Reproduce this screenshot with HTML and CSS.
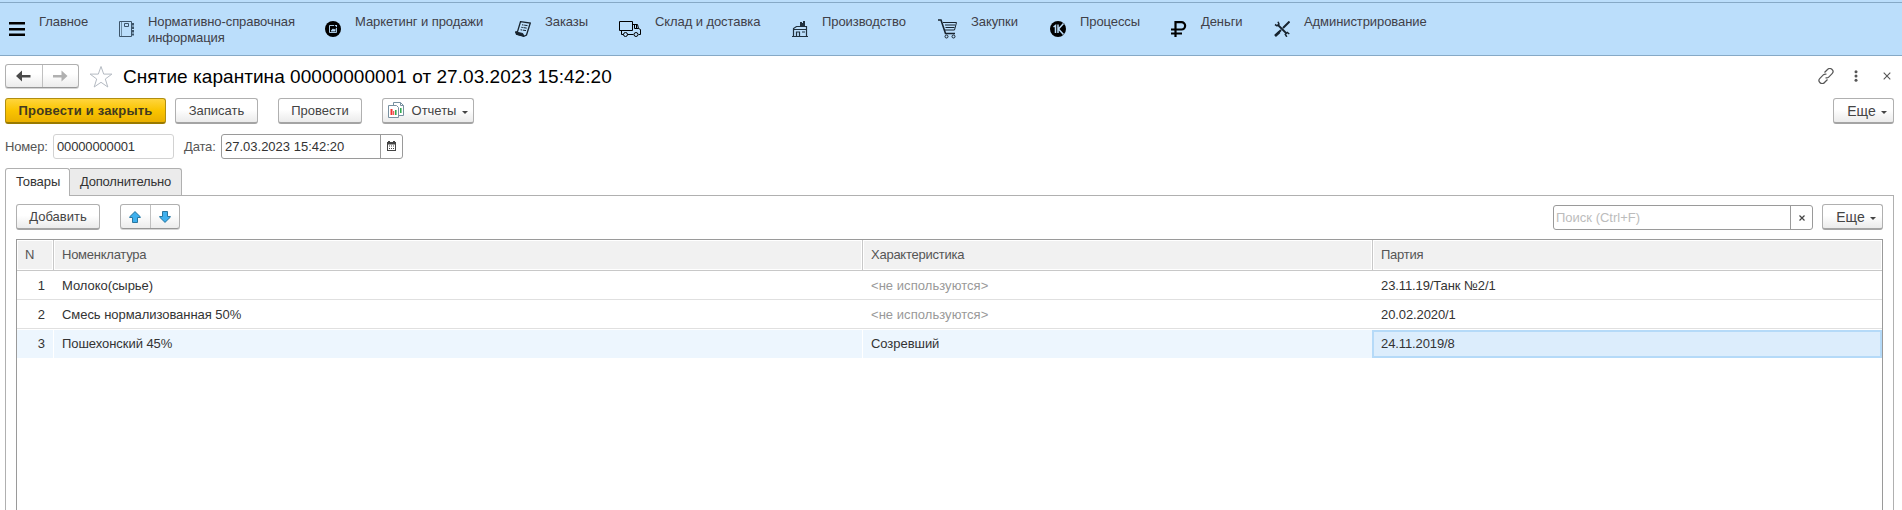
FILE: index.html
```html
<!DOCTYPE html>
<html lang="ru">
<head>
<meta charset="utf-8">
<title>Снятие карантина</title>
<link rel="stylesheet" href="styles.css">
</head>
<body>
<nav class="menu">
  <div class="item"><svg width="16" height="16" viewBox="0 0 16 16"><path d="M0 1h16v2.500H0zM0 7h16v2.500H0zM0 12.500h16V15H0z"/></svg><span>Главное</span></div>
  <div class="item"><svg width="16" height="16" viewBox="0 0 16 16" fill="none" stroke="#3d556a"><path d="M.5.5h12v15H.5z"/><path d="M2.500 1v14" stroke-width=".6"/><path d="M5.500 2.500h4v3h-4z"/><path d="M14 2v12.500" stroke-width="2" stroke-dasharray="2.500 1"/></svg><span>Нормативно-справочная<br>информация</span></div>
  <div class="item"><svg width="16" height="16" viewBox="0 0 16 16"><circle cx="8" cy="8" r="8"/><path d="M11.500 7v4.500h-7v-7H9" fill="none" stroke="#badcf8" stroke-width=".9"/><path d="M6 10.500h4.500V7.500L9 8.500 8 7.500l-2 2zM9.500 4h2.500v2.500z" fill="#badcf8"/></svg><span>Маркетинг и продажи</span></div>
  <div class="item"><svg width="16" height="16" viewBox="0 0 16 16" fill="none" stroke="#17232e"><path d="M5.500.7 15.300 2 11.500 14 8.800 15.300 1.500 13.300.7 11l1.800-.3z" stroke-width="1.300"/><path d="M7 3.800l5.500.8M6.300 6.300l5.400.8M5.600 8.800l5.400.8" stroke-dasharray="1.500 .7 5"/><path d="M.8 11l7 1.500 1 2.600-7-1.800z" fill="#17232e"/></svg><span>Заказы</span></div>
  <div class="item"><svg width="23" height="16" viewBox="0 0 23 16" fill="none" stroke="#000"><path d="M.5.500h13v9H.5zM2.500 9.500v4h2M8.500 13.500h6M13.500 3.500h5l1 4 2 1v5h-2M15.500 4v3.500h4M17.500 4v3"/><circle cx="6.500" cy="13.500" r="2"/><circle cx="17" cy="13.500" r="2"/></svg><span>Склад и доставка</span></div>
  <div class="item"><svg width="16" height="16" viewBox="0 0 16 16" fill="none" stroke="#1f303e"><path d="M8 1h2v1h1V0h2v5H8z" fill="#1f303e" stroke="none"/><path d="M1.500 15.500v-8l3-2h10v10zM0 15.500h16M1 8.500h13M4.500 15v-4h3v4M10 11h3" stroke-width="1.200"/></svg><span>Производство</span></div>
  <div class="item cart"><svg width="20" height="20" viewBox="0 0 20 20" fill="none" stroke="#17232e"><path d="M0 1h3l4.500 13.500H17" stroke-width="1.600"/><path d="M5 3.500h13.500L16.500 11H7M7 6h10M7.500 8.500h9"/><circle cx="8.500" cy="17.500" r="1.500"/><circle cx="15.500" cy="17.500" r="1.500"/></svg><span>Закупки</span></div>
  <div class="item"><svg width="16" height="16" viewBox="0 0 16 16"><circle cx="8" cy="8" r="8"/><path d="M3.500 6l2-1.500V12M8 3.500V12M13.500 2.500L8.500 8l5 5.500" fill="none" stroke="#badcf8" stroke-width="1.500"/></svg><span>Процессы</span></div>
  <div class="item"><svg width="16" height="16" viewBox="0 0 16 16" fill="none" stroke="#000" stroke-width="2.200"><path d="M4.500 16V1.200h6a3.600 3.600 0 0 1 0 7.300H0M0 12.500h11"/></svg><span>Деньги</span></div>
  <div class="item"><svg width="16" height="16" viewBox="0 0 16 16" fill="none" stroke="#17232e"><path d="M15.500.5L9 7M7 9l-5.500 5.500" stroke-width="2"/><path d="M1 15l4.500-4" stroke-width="2.600"/><path d="M4 4l8.500 8.500" stroke-width="1.800"/><path d="M1 3.500l2 1.300 2-1.800L4 .7M15.300 13l-2-1.500-2 1.800 1.500 2.500" stroke-width="1.500"/></svg><span>Администрирование</span></div>
</nav>
<header class="titlebar">
  <div class="pair nav"><button><svg width="15" height="12" viewBox="0 0 15 12"><path d="M0 6l6-5.500V5h8.500v2.500H6v4z" fill="#4a4a4a"/></svg></button><button><svg width="15" height="12" viewBox="0 0 15 12"><path d="M14.500 6l-6-5.500V5H0v2.500h8.500v4z" fill="#b0b0b0"/></svg></button></div>
  <svg class="star" width="24" height="24" viewBox="0 0 24 24"><path d="M12 1.500l2.700 7.600h8.200l-6.600 4.900 2.500 8L12 17.300 5.200 22l2.500-8L1.100 9.100h8.200z" fill="#fff" stroke="#b4bac2"/></svg>
  <h1>Снятие карантина 00000000001 от 27.03.2023 15:42:20</h1>
  <div class="tools">
    <svg width="16" height="16" viewBox="0 0 16 16" fill="none" stroke="#555" stroke-width="1.200"><path d="M6.500 4.500l3-3a3 3 0 0 1 4.600 0 3 3 0 0 1 0 4.200L10.500 9.300A3 3 0 0 1 7.500 9.700M9.500 11.500l-3 3a3 3 0 0 1-4.600 0 3 3 0 0 1 0-4.200L5.500 6.700A3 3 0 0 1 8.500 6.300"/></svg>
    <svg width="4" height="12" viewBox="0 0 4 12" fill="#555"><circle cx="2" cy="1.800" r="1.500"/><circle cx="2" cy="6" r="1.500"/><circle cx="2" cy="10.200" r="1.500"/></svg>
    <svg width="8" height="8" viewBox="0 0 8 8" stroke="#555" stroke-width="1.100"><path d="M.7.7l6.600 6.600M7.300.7L.7 7.300"/></svg>
  </div>
</header>
<div class="commands">
  <button class="btn primary">Провести и закрыть</button>
  <button class="btn save">Записать</button>
  <button class="btn post">Провести</button>
  <button class="btn reports"><svg width="17" height="17" viewBox="0 0 17 17" fill="#fff" stroke="#7890a0"><path d="M5.500.5h7l3 3v10h-10z"/><path d="M12.500.5v3h3" fill="none"/><path d="M.5 3.500h8l2 2v10H.5z"/><path d="M3.500 7v6" stroke="#e33" stroke-width="2"/><path d="M5.700 9v4" stroke="#e33"/><path d="M7.800 8v5M12.800 6v5" stroke="#2aa84a" stroke-width="1.500"/></svg><span>Отчеты</span><i class="caret"></i></button>
  <button class="btn more"><span>Еще</span><i class="caret"></i></button>
</div>
<div class="fields">
  <label class="number-label">Номер:</label>
  <div class="input number">00000000001</div>
  <label class="date-label">Дата:</label>
  <div class="input date"><span>27.03.2023 15:42:20</span><b><svg width="9" height="10" viewBox="0 0 9 10"><path d="M0 1h1V0h2v1h3V0h2v1h1v9H0z" fill="#444"/><path d="M1 3.500h7V9H1z" fill="#fff"/><path d="M2 5h5M2 7.500h5" stroke="#444" stroke-dasharray="1 1"/></svg></b></div>
</div>
<div class="tabs"><div class="tab active">Товары</div><div class="tab">Дополнительно</div></div>
<main class="pane">
  <div class="toolbar">
    <button class="btn add">Добавить</button>
    <div class="pair arrows"><button><svg width="12" height="12" viewBox="0 0 12 12"><path d="M6 .6l5.300 5.200v.7H8.500v5h-5v-5H.7v-.7z" fill="#3fb0ee" stroke="#28769f"/></svg></button><button><svg width="12" height="12" viewBox="0 0 12 12"><path d="M6 11.400L.7 6.200v-.7h2.800v-5h5v5h2.800v.7z" fill="#3fb0ee" stroke="#28769f"/></svg></button></div>
    <div class="input search"><span>Поиск (Ctrl+F)</span><b><svg width="6" height="6" viewBox="0 0 6 6" stroke="#444" stroke-width="1.200"><path d="M.5.5l5 5M5.500.5l-5 5"/></svg></b></div>
    <button class="btn more"><span>Еще</span><i class="caret"></i></button>
  </div>
  <div class="grid">
    <div class="row head"><div>N</div><div>Номенклатура</div><div>Характеристика</div><div>Партия</div></div>
    <div class="row"><div>1</div><div>Молоко(сырье)</div><div class="unused">&lt;не используются&gt;</div><div class="batch">23.11.19/Танк №2/1</div></div>
    <div class="row"><div>2</div><div>Смесь нормализованная 50%</div><div class="unused">&lt;не используются&gt;</div><div class="batch">20.02.2020/1</div></div>
    <div class="row selected"><div>3</div><div>Пошехонский 45%</div><div>Созревший</div><div class="batch current">24.11.2019/8</div></div>
  </div>
</main>
</body>
</html>
```

FILE: styles.css
```css
* { box-sizing: border-box; }
body { margin: 0; height: 510px; overflow: hidden; background: #fff; color: #333; font: 13px/16px "Liberation Sans", Arial, sans-serif; display: flex; flex-direction: column; }
svg { display: block; flex: none; }
button { font: inherit; color: #444; padding: 0; margin: 0; }

.menu { flex: none; height: 56px; padding-left: 9px; background: linear-gradient(#bbdefb 2px, #86a9c6 2px, #86a9c6 3px, #bbdefb 3px); border-bottom: 1px solid #86a9c6; display: grid; grid-template-columns: 110px 206px 190px 104px 173px 146px 112px 121px 103px 1fr; }
.item { display: grid; grid-template-columns: 30px 1fr; align-items: start; padding-top: 14px; color: #404048; white-space: nowrap; letter-spacing: -.08px; }
.item:nth-child(2) { grid-template-columns: 29px 1fr; }
.item:nth-child(5) { grid-template-columns: 36px 1fr; }
.item.cart { grid-template-columns: 33px 1fr; }
.item svg { margin-top: 7px; }
.item.cart svg { margin-top: 5px; }

.titlebar { flex: none; height: 42px; padding: 8px 11px 0 5px; display: flex; align-items: flex-start; }
.pair { display: flex; border: 1px solid #b0b0b0; border-bottom-color: #969696; border-radius: 3px; background: linear-gradient(#fff 40%, #ececec); box-shadow: 0 1px 0 #d4d4d4; }
.pair button { flex: 1; border: 0; background: none; display: flex; align-items: center; justify-content: center; }
.pair button + button { border-left: 1px solid #c0c0c0; }
.nav { width: 74px; height: 24px; }
.star { margin: 1px 0 0 10px; }
h1 { margin: 1px 0 0 10px; font-size: 19px; line-height: 24px; font-weight: 400; color: #000; letter-spacing: .05px; }
.tools { margin-left: auto; height: 24px; display: flex; align-items: center; }
.tools svg:nth-child(2) { margin-left: 20px; }
.tools svg:nth-child(3) { margin-left: 25px; }

.commands { flex: none; height: 36px; padding: 0 8px 0 5px; display: flex; }
.btn { height: 26px; border: 1px solid #b0b0b0; border-bottom: 2px solid #a4a4a4; border-radius: 3px; background: linear-gradient(#fff 45%, #ebebeb); display: flex; align-items: center; justify-content: center; white-space: nowrap; padding-top: 1px; }
.primary { width: 161px; font-weight: 700; letter-spacing: .2px; color: #423a20; border-color: #b08e10; border-bottom-color: #9a7a00; background: linear-gradient(#ffd53d, #fac400 50%, #eab000); }
.save { width: 83px; margin-left: 9px; }
.post { width: 84px; margin-left: 20px; }
.reports { width: 92px; margin-left: 20px; }
.reports svg { margin-top: -2px; }
.reports span { margin-left: 7px; }
.caret { border: 3px solid transparent; border-top-color: #444; border-bottom: 0; margin: 2px 0 0 6px; }
.more { width: 61px; margin-left: auto; padding-left: 7px; }
.more span { font-size: 14px; }
.more .caret { margin-left: 5px; }

.fields { flex: none; height: 34px; padding-left: 5px; display: flex; line-height: 25px; color: #555; }
.number-label { width: 48px; letter-spacing: -.15px; }
.input { height: 25px; border: 1px solid #9a9a9a; border-radius: 3px; line-height: 23px; color: #333; display: flex; padding-left: 3px; }
.input span { flex: 1; }
.input b { border-left: 1px solid #9a9a9a; width: 22px; display: flex; align-items: center; justify-content: center; }
.number { width: 121px; border-color: #d2d2d2; letter-spacing: -.15px; }
.date-label { width: 37px; margin-left: 10px; letter-spacing: -.15px; }
.date { width: 182px; }
.date svg { margin-top: -2px; }

.tabs { flex: none; height: 27px; padding-left: 5px; display: flex; }
.tab { height: 27px; width: 112px; border: 1px solid #b0b0b0; border-width: 1px 1px 0 0; border-radius: 0 3px 0 0; background: #ebebeb; line-height: 26px; padding-left: 10px; letter-spacing: -.2px; }
.tab.active { width: 65px; height: 28px; z-index: 1; border-left-width: 1px; border-radius: 3px 3px 0 0; background: #fff; letter-spacing: -.1px; }

.pane { flex: 1; margin: 0 8px 0 5px; border: 1px solid #b0b0b0; border-bottom: 0; padding: 8px 10px 0; display: flex; flex-direction: column; }
.toolbar { flex: none; height: 35px; display: flex; }
.add { width: 84px; }
.arrows { width: 60px; height: 25px; margin-left: 20px; }
.search { width: 260px; margin: 1px 9px 0 auto; color: #bcbcbc; padding-left: 2px; }
.toolbar .more { margin-left: 0; }

.grid { flex: 1; border: 1px solid #9a9a9a; border-bottom: 0; }
.row { display: grid; grid-template-columns: 36px 809px 510px 1fr; height: 29px; border-bottom: 1px solid #e0e0e0; line-height: 29px; letter-spacing: -.05px; }
.row > div { padding: 0 0 0 8px; border-left: 1px solid transparent; }
.row > div:first-child { border-left: 0; text-align: right; padding-right: 8px; }
.row.head { height: 31px; border-color: #c8c8c8; line-height: 28px; color: #555; letter-spacing: -.25px; }
.row.head > div { background: #f1f1f1; background-clip: content-box; border-left: 1px solid #c8c8c8; padding: 1px; text-indent: 7px; }
.row.head > div:first-child { border-left: 0; text-align: left; }
.row > .unused { color: #999; letter-spacing: .05px; }
.row > .batch { letter-spacing: -.1px; }
.selected > div { background: #edf6fe; border-left-color: #fff; margin: 1px 0; line-height: 27px; }
.row > .current { background: #dcedfc; border: 2px solid #b5daf8; padding-left: 7px; line-height: 24px; }
```
